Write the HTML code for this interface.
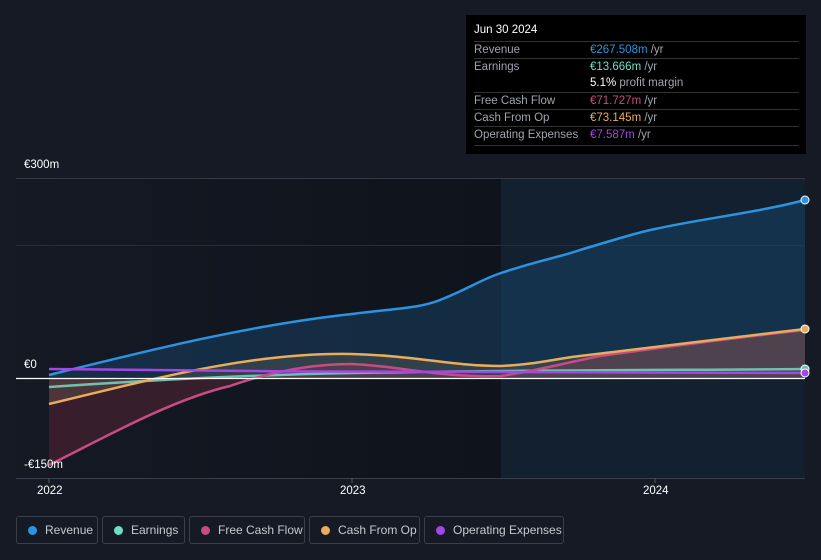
<!DOCTYPE html>
<html><head><meta charset="utf-8"><style>
body{margin:0;width:821px;height:560px;background:#151a25;font-family:"Liberation Sans",sans-serif;overflow:hidden;position:relative}
.tt{position:absolute;left:466px;top:15px;width:340px;height:139px;background:#000;color:#fff;font-size:11.5px}
.tt .h{position:absolute;left:8px;top:9px;font-size:11.5px}
.row{position:absolute;left:8px;width:325px;border-top:1px solid #333;height:17px}
.row span{position:absolute;top:2px}
.l{left:0;color:#a0a4ab}.v{left:116px;color:#a0a4ab}
.lg{position:absolute;top:516px;height:28px;border:1px solid #3a3f4a;border-radius:3px;color:#c6c9ce;font-size:12px;box-sizing:border-box}
.lg i{position:absolute;left:11px;top:9px;width:9px;height:9px;border-radius:50%}
.lg span{position:absolute;left:28px;top:6px}
.ax{position:absolute;color:#fff;font-size:11.5px}
</style></head><body>
<svg width="821" height="560" style="position:absolute;left:0;top:0">
<defs><linearGradient id="bg" x1="0" x2="1"><stop offset="0" stop-color="#141924"/><stop offset="1" stop-color="#0f131b"/></linearGradient></defs>
<rect x="16" y="178" width="485" height="300" fill="url(#bg)"/>
<rect x="501" y="178" width="304" height="300" fill="#12202f"/>
<line x1="16" y1="178.5" x2="805" y2="178.5" stroke="#333a45"/>
<line x1="16" y1="245.5" x2="805" y2="245.5" stroke="#262d38"/>
<line x1="16" y1="478.5" x2="805" y2="478.5" stroke="#3a404b"/>
<line x1="49" y1="478" x2="49" y2="483" stroke="#555"/>
<line x1="352" y1="478" x2="352" y2="483" stroke="#555"/>
<line x1="655" y1="478" x2="655" y2="483" stroke="#555"/>
<path d="M49,375 C150,350 250,325 352,314 C400,308 420,308 440,300 C470,288 480,280 501,273 C540,260 560,257 580,250 C620,238 640,232 655,229 C700,219 760,212 805,200 L805,378 L49,378Z" fill="#1a4a70" fill-opacity="0.45"/>
<path d="M49,378 L49,465 C100,440 170,400 230,386 C270,372 310,364 352,364 C400,366 440,378 501,376 C540,370 560,364 600,356 C680,345 760,335 805,330 L805,378Z" fill="#7a2a40" fill-opacity="0.35"/>
<path d="M49,404 C150,380 250,352 352,354 C420,356 450,366 501,366 C540,364 560,358 580,356 C680,344 760,334 805,329 L805,378 L49,378Z" fill="#8a7a60" fill-opacity="0.25"/>
<path d="M49,375 C150,350 250,325 352,314 C400,308 420,308 440,300 C470,288 480,280 501,273 C540,260 560,257 580,250 C620,238 640,232 655,229 C700,219 760,212 805,200" fill="none" stroke="#2b94e0" stroke-width="2.5"/>
<path d="M49,387 C150,380 250,375 352,373 C500,370 700,370 805,369" fill="none" stroke="#6fc0b0" stroke-width="2.5"/>
<path d="M49,465 C100,440 170,400 230,386 C270,372 310,364 352,364 C400,366 440,378 501,376 C540,370 560,364 600,356 C680,345 760,335 805,330" fill="none" stroke="#c94b84" stroke-width="2.5"/>
<path d="M49,404 C150,380 250,352 352,354 C420,356 450,366 501,366 C540,364 560,358 580,356 C680,344 760,334 805,329" fill="none" stroke="#e8ad5c" stroke-width="2.5"/>
<path d="M49,369 C300,372 500,373 805,373" fill="none" stroke="#a347e6" stroke-width="2.5"/>
<line x1="16" y1="378.5" x2="805" y2="378.5" stroke="#fff" stroke-width="1.2"/>
<circle cx="805" cy="200" r="4" fill="#2b94e0" stroke="#fff" stroke-width="1"/>
<circle cx="805" cy="329" r="4" fill="#e8ad5c" stroke="#fff" stroke-width="1"/>
<circle cx="805" cy="369" r="4" fill="#6fc0b0" stroke="#fff" stroke-width="1"/>
<circle cx="805" cy="373" r="4" fill="#a347e6" stroke="#fff" stroke-width="1"/>
</svg>
<div class="ax" style="left:24px;top:159px">€300m</div>
<div class="ax" style="left:24px;top:359px">€0</div>
<div class="ax" style="left:24px;top:459px">-€150m</div>
<div class="ax" style="left:37px;top:485px">2022</div>
<div class="ax" style="left:340px;top:485px">2023</div>
<div class="ax" style="left:643px;top:485px">2024</div>
<div class="tt"><div class="h">Jun 30 2024</div>
<div class="row" style="top:26px"><span class="l">Revenue</span><span class="v"><b style="color:#2b94e0;font-weight:normal">€267.508m</b> /yr</span></div>
<div class="row" style="top:43px"><span class="l">Earnings</span><span class="v"><b style="color:#6fe0c8;font-weight:normal">€13.666m</b> /yr</span></div>
<div class="row" style="top:60px;border-top:none"><span class="v"><b style="color:#fff;font-weight:normal">5.1%</b> profit margin</span></div>
<div class="row" style="top:77px"><span class="l">Free Cash Flow</span><span class="v"><b style="color:#c94b84;font-weight:normal">€71.727m</b> /yr</span></div>
<div class="row" style="top:94px"><span class="l">Cash From Op</span><span class="v"><b style="color:#e8ad5c;font-weight:normal">€73.145m</b> /yr</span></div>
<div class="row" style="top:111px"><span class="l">Operating Expenses</span><span class="v"><b style="color:#a347e6;font-weight:normal">€7.587m</b> /yr</span></div>
<div class="row" style="top:130px;height:0"></div>
</div>
<div class="lg" style="left:16px;width:82px"><i style="background:#2b94e0"></i><span>Revenue</span></div>
<div class="lg" style="left:102px;width:83px"><i style="background:#6fe0c8"></i><span>Earnings</span></div>
<div class="lg" style="left:189px;width:116px"><i style="background:#c94b84"></i><span>Free Cash Flow</span></div>
<div class="lg" style="left:309px;width:111px"><i style="background:#e8ad5c"></i><span>Cash From Op</span></div>
<div class="lg" style="left:424px;width:140px"><i style="background:#a347e6"></i><span>Operating Expenses</span></div>
</body></html>
